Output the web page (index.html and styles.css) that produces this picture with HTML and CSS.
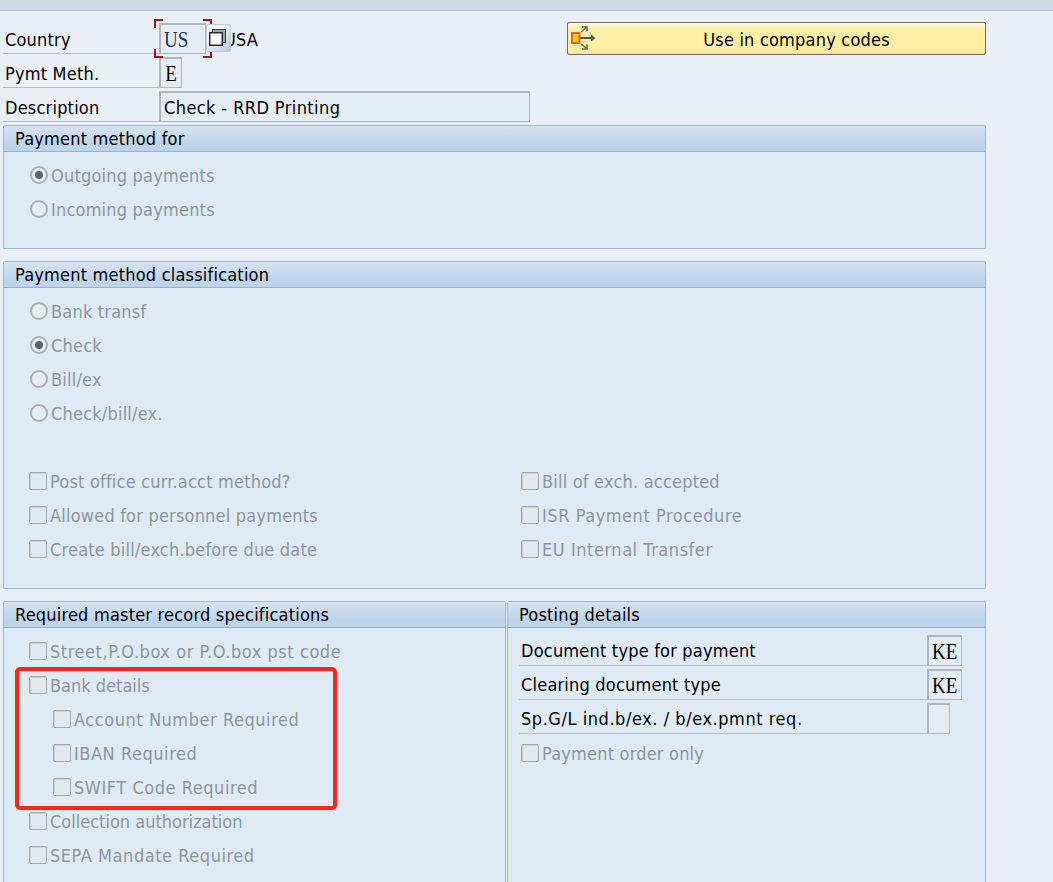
FILE: index.html
```html
<!DOCTYPE html>
<html lang="en">
<head>
  <meta charset="UTF-8" />
  <title>Payment method in country</title>
  <link rel="stylesheet" href="styles.css">
</head>
<body>
  <div class="topbar"></div>
  <main class="page">
    <div class="head">
      <div class="head-rows">
        <div class="row">
          <span class="row-label">Country</span>
          <span class="key-wrap">
            <span class="field field-country"><span class="tall">US</span></span>
            <svg class="required-marks" width="58" height="39" viewBox="0 0 58 39">
              <path d="M9 1H1V9M49 1H57V9M1 30V38H9M57 30V38H49" fill="none" stroke="#a81414" stroke-width="2"/>
            </svg>
          </span>
          <button class="value-help" type="button" aria-label="Copy">
            <svg width="17" height="17" viewBox="0 0 17 17">
              <rect x="3.5" y="0.5" width="13" height="13" fill="#9aa6b4" stroke="#3c3c3c"/>
              <rect x="0.75" y="3.75" width="12.5" height="12.5" fill="#fff" stroke="#2e2e2e" stroke-width="1.5"/>
            </svg>
          </button>
          <span class="country-name">USA</span>
        </div>
        <div class="row">
          <span class="row-label">Pymt Meth.</span>
          <span class="field field-char"><span class="tall">E</span></span>
        </div>
        <div class="row">
          <span class="row-label">Description</span>
          <span class="field field-text">Check - RRD Printing</span>
        </div>
      </div>
      <button class="action" type="button">
        <svg class="action-icon" width="26" height="26" viewBox="0 0 26 26">
          <path d="M11 7L16.5 2.5M12 2H17V6.5M11 19L16.5 23.5M12 24H17V19.5" fill="none" stroke="#666" stroke-width="1.5"/>
          <path d="M10 13H22" stroke="#555" stroke-width="2"/>
          <path d="M21 9.5L25.5 13L21 16.5Z" fill="#555"/>
          <rect x="2" y="8" width="7.5" height="10" fill="#ffc61a" stroke="#dd6a2a" stroke-width="2"/>
        </svg>
        Use in company codes
      </button>
    </div>

    <section class="panel">
      <h2 class="panel-title">Payment method for</h2>
      <div class="panel-body">
        <label class="opt"><span class="radio checked"></span>Outgoing payments</label>
        <label class="opt"><span class="radio"></span>Incoming payments</label>
      </div>
    </section>

    <section class="panel">
      <h2 class="panel-title">Payment method classification</h2>
      <div class="panel-body">
        <label class="opt"><span class="radio"></span>Bank transf</label>
        <label class="opt"><span class="radio checked"></span>Check</label>
        <label class="opt"><span class="radio"></span>Bill/ex</label>
        <label class="opt"><span class="radio"></span>Check/bill/ex.</label>
        <div class="opt"></div>
        <div class="opt-grid">
          <label class="opt"><span class="check"></span>Post office curr.acct method?</label>
          <label class="opt"><span class="check"></span>Bill of exch. accepted</label>
          <label class="opt"><span class="check"></span>Allowed for personnel payments</label>
          <label class="opt wide"><span class="check"></span>ISR Payment Procedure</label>
          <label class="opt"><span class="check"></span>Create bill/exch.before due date</label>
          <label class="opt wide"><span class="check"></span>EU Internal Transfer</label>
        </div>
      </div>
    </section>

    <div class="split">
      <section class="panel panel-master">
        <h2 class="panel-title">Required master record specifications</h2>
        <div class="panel-body">
          <label class="opt wide"><span class="check"></span>Street,P.O.box or P.O.box pst code</label>
          <div class="marked">
            <label class="opt tight"><span class="check"></span>Bank details</label>
            <label class="opt opt-sub wide"><span class="check"></span>Account Number Required</label>
            <label class="opt opt-sub wide"><span class="check"></span>IBAN Required</label>
            <label class="opt opt-sub wide"><span class="check"></span>SWIFT Code Required</label>
            <div class="red-box"></div>
          </div>
          <label class="opt tight"><span class="check"></span>Collection authorization</label>
          <label class="opt wide"><span class="check"></span>SEPA Mandate Required</label>
        </div>
      </section>
      <section class="panel panel-posting">
        <h2 class="panel-title">Posting details</h2>
        <div class="panel-body">
          <div class="post-row"><span class="post-label">Document type for payment</span><span class="field field-doc"><span class="tall">KE</span></span></div>
          <div class="post-row"><span class="post-label">Clearing document type</span><span class="field field-doc"><span class="tall">KE</span></span></div>
          <div class="post-row"><span class="post-label wide">Sp.G/L ind.b/ex. / b/ex.pmnt req.</span><span class="field field-empty"></span></div>
          <label class="opt"><span class="check"></span>Payment order only</label>
        </div>
      </section>
    </div>
  </main>
</body>
</html>
```

FILE: styles.css
```css
* { box-sizing: border-box; }
html, body { height: 100%; margin: 0; padding: 0; }
body {
  font-family: "DejaVu Sans Condensed", "DejaVu Sans", sans-serif;
  font-size: 18px;
  letter-spacing: 0.2px;
  color: #000;
  background: #e8eff7;
  overflow: hidden;
}
.topbar {
  height: 11px;
  background: #cfdde8;
  border-bottom: 1px solid #a9bbcf;
}
.page {
  padding: 9px 67px 0 3px;
}
.wide { letter-spacing: 0.55px; }
.tight { letter-spacing: 0; }

/* header fields */
.head {
  display: flex;
  justify-content: space-between;
  align-items: flex-start;
  height: 105px;
}
.head-rows {
  width: 527px;
}
.row {
  display: flex;
  align-items: center;
  height: 34px;
}
.row-label {
  width: 156px;
  height: 34px;
  line-height: 39px;
  padding-left: 2px;
  border-bottom: 1px solid #b8bec5;
  flex: none;
}
.field {
  display: block;
  flex: none;
  height: 31px;
  margin-top: 2px;
  background: #e3edf6;
  border: 1px solid #b0b6bc;
  border-top-width: 2px;
  border-left-width: 2px;
  font-family: "Liberation Serif", serif;
  font-size: 19px;
  letter-spacing: 0;
  line-height: 29px;
}
.tall {
  display: inline-block;
  transform: scaleY(1.2);
}
.key-wrap {
  position: relative;
  display: block;
  flex: none;
}
.field-country {
  width: 47px;
  padding-left: 3px;
  color: #1d3550;
}
.required-marks {
  position: absolute;
  left: -5px;
  top: -2px;
}
.value-help {
  position: relative;
  z-index: 1;
  flex: none;
  display: flex;
  align-items: center;
  justify-content: flex-start;
  width: 25px;
  height: 28px;
  margin-top: 1px;
  padding: 0 0 0 2px;
  background: linear-gradient(135deg, #eef3f8 35%, #b4c9e2);
  border: 1px solid #c2ccd6;
  border-radius: 2px;
}
.country-name {
  margin-left: -7px;
  padding-top: 4px;
}
.field-char {
  width: 23px;
  text-align: center;
}
.field-text {
  width: 371px;
  padding-left: 3px;
  font-family: "DejaVu Sans Condensed", "DejaVu Sans", sans-serif;
  font-size: 18px;
  letter-spacing: 0.4px;
  line-height: 30px;
}
.action {
  display: flex;
  align-items: center;
  justify-content: center;
  position: relative;
  width: 419px;
  height: 33px;
  margin-top: 2px;
  padding: 2px 0 0 40px;
  background: linear-gradient(#fff8d4, #ffefa6 22%, #ffefa6 85%, #f1e3a0);
  border: 1px solid #6c6c6c;
  border-radius: 2px;
  font: inherit;
  letter-spacing: inherit;
  color: #000;
}
.action-icon {
  position: absolute;
  left: 2px;
  top: 2px;
}

/* panels */
.panel {
  margin: 0 0 12px;
  background: #deeaf4;
  border: 1px solid #a3b7d0;
  border-radius: 2px 2px 0 0;
}
.panel-title {
  height: 26px;
  margin: 0;
  padding-left: 11px;
  background: linear-gradient(#d6e3f1, #bed4ea 70%);
  border-bottom: 1px solid #99afcd;
  font-size: 18px;
  font-weight: normal;
  line-height: 26px;
}
.panel-body {
  padding: 6px 0 22px 26px;
}
.opt {
  display: flex;
  align-items: center;
  height: 34px;
  color: #8d969d;
}
.opt-sub {
  padding-left: 24px;
}
.opt-grid {
  display: grid;
  grid-template-columns: 492px 1fr;
}
.radio {
  flex: none;
  width: 18px;
  height: 18px;
  margin-right: 3px;
  border: 2px solid #a9afb5;
  border-radius: 50%;
  background: #e6edf3;
  display: flex;
  align-items: center;
  justify-content: center;
}
.radio.checked::after {
  content: "";
  width: 8px;
  height: 8px;
  border-radius: 50%;
  background: #5c6269;
}
.check {
  flex: none;
  width: 18px;
  height: 18px;
  margin: 0 3px 0 -1px;
  border: 1px solid #a4aab0;
  border-radius: 2px;
  background: #e0e8f0;
  box-shadow: inset 1px 1px 0 #c9d0d6;
}

/* bottom split */
.split {
  display: flex;
  gap: 1px;
  margin-top: 12px;
}
.split .panel {
  height: 320px;
  margin: 0;
}
.panel-master { width: 503px; flex: none; }
.panel-posting { flex: 1; }
.panel-posting .panel-body {
  padding: 4px 0 0 11px;
}
.panel-posting .opt {
  margin: 2px 0 0 3px;
}
.post-row {
  display: flex;
  height: 34px;
  margin-right: 23px;
}
.post-label {
  flex: 1;
  padding-left: 2px;
  line-height: 38px;
  border-bottom: 1px solid #b8bec5;
}
.field-doc {
  width: 35px;
  margin-top: 3px;
  padding-left: 3px;
}
.field-empty {
  width: 23px;
  margin-right: 12px;
  margin-top: 3px;
}
.marked {
  position: relative;
}
.red-box {
  position: absolute;
  left: -15px;
  top: -1px;
  width: 322px;
  height: 143px;
  border: 4px solid #ff2416;
  border-radius: 5px;
}
```
